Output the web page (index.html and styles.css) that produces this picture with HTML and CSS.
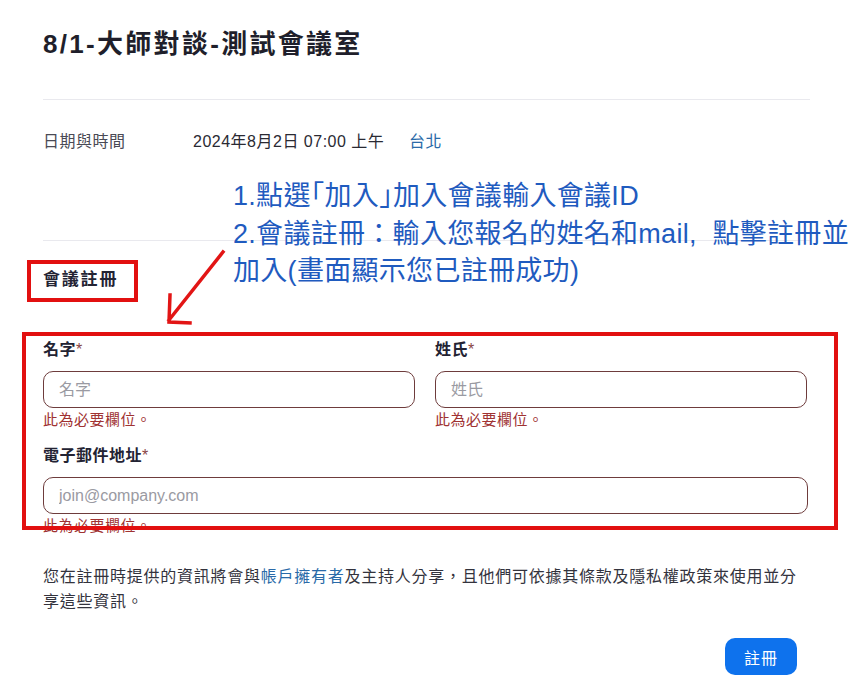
FILE: index.html
```html
<!DOCTYPE html>
<html lang="zh-Hant">
<head>
  <meta charset="UTF-8">
  <meta name="viewport" content="width=device-width, initial-scale=1.0">
  <title>8/1-大師對談-測試會議室</title>
  <link rel="stylesheet" href="styles.css">
</head>
<body>
  <div class="page">
    <h1 class="title">8/1-大師對談-測試會議室</h1>
    <hr class="divider">

    <div class="info-row">
      <span class="info-label">日期與時間</span>
      <span class="info-value">2024年8月2日 07:00 上午</span>
      <a class="info-zone" href="#">台北</a>
    </div>
    <hr class="divider divider-2">

    <h2 class="section-title">會議註冊</h2>

    <form class="reg-form" onsubmit="return false">
      <div class="field-row">
        <div class="field">
          <label class="field-label" for="first">名字<span class="req">*</span></label>
          <input class="field-input" id="first" type="text" placeholder="名字">
          <div class="field-error">此為必要欄位。</div>
        </div>
        <div class="field">
          <label class="field-label" for="last">姓氏<span class="req">*</span></label>
          <input class="field-input" id="last" type="text" placeholder="姓氏">
          <div class="field-error">此為必要欄位。</div>
        </div>
      </div>
      <div class="field field-email">
        <label class="field-label" for="email">電子郵件地址<span class="req">*</span></label>
        <input class="field-input" id="email" type="text" placeholder="join@company.com">
        <div class="field-error">此為必要欄位。</div>
      </div>

      <p class="notice">您在註冊時提供的資訊將會與<a href="#">帳戶擁有者</a>及主持人分享，且他們可依據其條款及隱私權政策來使用並分享這些資訊。</p>

      <div class="actions">
        <button class="btn-register" type="submit">註冊</button>
      </div>
    </form>

    <!-- annotations drawn over the screenshot -->
    <div class="note">
      1.點選<span class="br">「</span>加入<span class="br">」</span>加入會議輸入會議ID<br>
      2.會議註冊：輸入您報名的姓名和mail,&nbsp;&nbsp;點擊註冊並<br>
      加入(畫面顯示您已註冊成功)
    </div>
    <div class="mark mark-heading"></div>
    <div class="mark mark-form"></div>
    <svg class="arrow" width="80" height="90" viewBox="0 0 80 90">
      <path d="M73 10 L19 78 M20 53 L19 80 L40 81" fill="none" stroke="#e21515" stroke-width="3.5" stroke-linecap="square"/>
    </svg>
  </div>
</body>
</html>
```

FILE: styles.css
```css
body { margin: 0; background: #fff; font-family: "Liberation Sans", "Noto Sans CJK TC", sans-serif; color: #232333; }
.page { position: relative; width: 767px; padding: 0 46px 0 43px; }

.title { margin: 0; padding-top: 28px; font-size: 26px; line-height: 32px; letter-spacing: 2.3px; font-weight: bold; color: #1f1f2b; }
.divider { margin: 39px 0 0; border: 0; border-top: 1px solid #e9e9ee; }
.divider-2 { margin-top: 88px; }

.info-row { display: flex; margin-top: 32px; font-size: 16px; line-height: 20px; letter-spacing: 0.5px; }
.info-label { width: 150px; color: #4a4a55; }
.info-value { width: 216px; color: #2a2a33; }
.info-zone { color: #2a6aa8; text-decoration: none; }

.section-title { margin: 28px 0 0; font-size: 17px; line-height: 22px; letter-spacing: 1.8px; font-weight: bold; }

.reg-form { margin-top: 49px; }
.field-row { display: flex; gap: 20px; width: 764px; }
.field { flex: 1; }
.field-label { display: block; font-size: 16px; line-height: 20px; letter-spacing: 0.5px; font-weight: bold; color: #232333; }
.req { font-weight: normal; color: #8a4545; }
.field-input { box-sizing: border-box; display: block; width: 100%; height: 37px; margin-top: 11px; padding: 0 15px; border: 1px solid #6e3c3c; border-radius: 10px; font-family: inherit; font-size: 16px; color: #232333; }
.field-input::placeholder { color: #9a9aa2; }
.field-error { margin-top: 2px; font-size: 15px; line-height: 20px; letter-spacing: 0.5px; color: #a03232; }
.field-email { margin-top: 16px; width: 765px; }

.notice { margin: 28px 0 0; font-size: 16px; line-height: 25px; letter-spacing: 0.75px; color: #33333d; }
.notice a { color: #2a6aa8; text-decoration: none; }

.actions { display: flex; justify-content: flex-end; margin-top: 24px; padding-right: 13px; }
.btn-register { height: 37px; padding: 0 19px; border: 0; border-radius: 10px; background: #0e72ed; color: #fff; font-family: inherit; font-size: 16px; letter-spacing: 1px; }

.note { position: absolute; left: 233px; top: 178px; font-size: 27px; line-height: 37.5px; letter-spacing: 0.3px; color: #1f5bbf; white-space: nowrap; }
.note .br { font-feature-settings: "halt"; }
.mark { position: absolute; border: 4px solid #e21010; }
.mark-heading { left: 27px; top: 260px; width: 103px; height: 34px; }
.mark-form { left: 22px; top: 332px; width: 808px; height: 190px; }
.arrow { position: absolute; left: 150px; top: 242px; }
```
